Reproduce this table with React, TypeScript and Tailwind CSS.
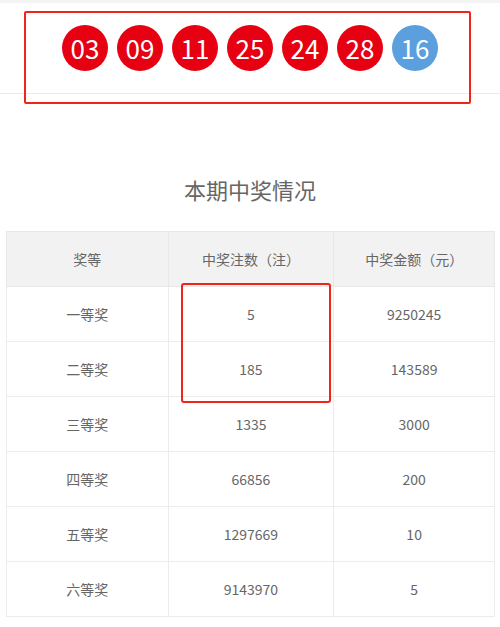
const balls = [
  { n: '03', blue: false },
  { n: '09', blue: false },
  { n: '11', blue: false },
  { n: '25', blue: false },
  { n: '24', blue: false },
  { n: '28', blue: false },
  { n: '16', blue: true },
]

const rows = [
  ['一等奖', '5', '9250245'],
  ['二等奖', '185', '143589'],
  ['三等奖', '1335', '3000'],
  ['四等奖', '66856', '200'],
  ['五等奖', '1297669', '10'],
  ['六等奖', '9143970', '5'],
]

export default function App() {
  return (
    <div className="relative w-[500px] h-[627px] bg-white overflow-hidden text-[#666]" style={{ fontFamily: '"Noto Sans CJK SC", "Noto Sans", sans-serif' }}>
      <div className="h-[3px] bg-[#f4f4f4]" />
      <div className="h-[91px] flex items-center justify-center gap-[9px] border-b border-[#ebebeb]">
        {balls.map((b, i) => (
          <div
            key={i}
            className={`w-[46px] h-[46px] rounded-full flex items-center justify-center text-white text-[26px] leading-none ${b.blue ? 'bg-[#5b9fdf]' : 'bg-[#e60012]'}`}
          >
            {b.n}
          </div>
        ))}
      </div>

      <h2 className="pt-[80px] text-center text-[22px] leading-[30px] text-[#666] font-normal">本期中奖情况</h2>

      <table className="mt-[27px] ml-[6px] w-[489px] border-collapse text-[14px] text-center">
        <colgroup>
          <col className="w-[162px]" />
          <col className="w-[166px]" />
          <col className="w-[161px]" />
        </colgroup>
        <thead>
          <tr className="h-[55px] bg-[#f2f2f2]">
            <th className="border border-[#e8e8e8] font-normal">奖等</th>
            <th className="border border-[#e8e8e8] font-normal">中奖注数（注）</th>
            <th className="border border-[#e8e8e8] font-normal">中奖金额（元）</th>
          </tr>
        </thead>
        <tbody>
          {rows.map((r) => (
            <tr key={r[0]} className="h-[55px]">
              {r.map((c, j) => (
                <td key={j} className="border border-[#ececec]">{c}</td>
              ))}
            </tr>
          ))}
        </tbody>
      </table>

      <div className="absolute left-[24px] top-[11px] w-[447px] h-[93px] border-2 border-[#f2231a] rounded-[2px]" />
      <div className="absolute left-[181px] top-[283px] w-[150px] h-[120px] border-2 border-[#f2231a] rounded-[3px]" />
    </div>
  )
}
